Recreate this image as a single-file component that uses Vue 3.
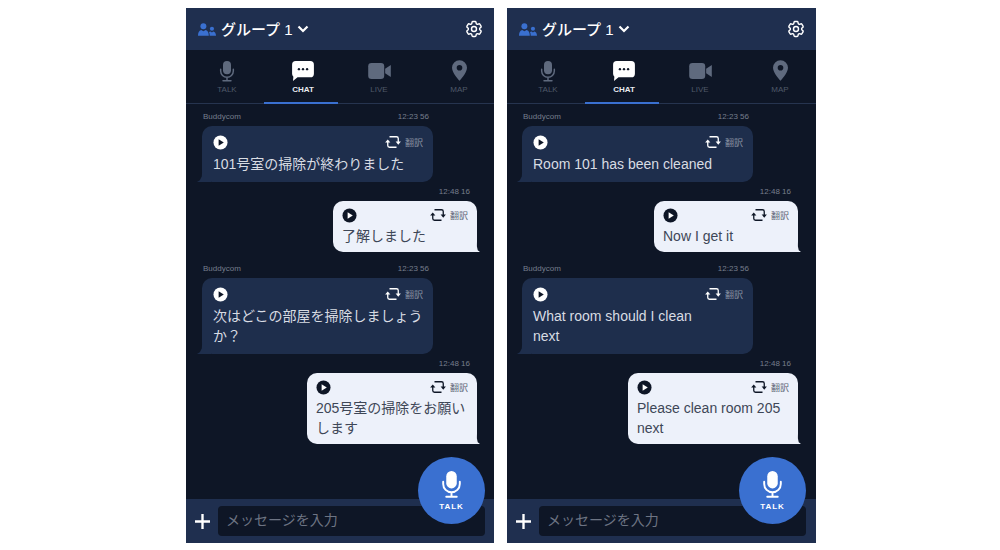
<template>
  <div class="page">
    <svg class="defs" width="0" height="0">
      <symbol id="mic" viewBox="0 0 24 32">
        <rect x="6" y="1" width="12" height="20" rx="6" fill="currentColor" />
        <path d="M2.500 13.500v2.500a9.500 9.500 0 0 0 19 0v-2.500M12 25.500V30M6 30.500h12" fill="none" stroke="currentColor" stroke-width="2.200" stroke-linecap="round" />
      </symbol>
      <symbol id="chat" viewBox="0 0 24 22">
        <path d="M4 0h16a4 4 0 0 1 4 4v10a4 4 0 0 1-4 4H6l-5 4 .4-4.800A4 4 0 0 1 0 14V4a4 4 0 0 1 4-4z" fill="currentColor" />
        <circle cx="7.500" cy="9" r="1.300" fill="#0e1626" />
        <circle cx="12" cy="9" r="1.300" fill="#0e1626" />
        <circle cx="16.500" cy="9" r="1.300" fill="#0e1626" />
      </symbol>
      <symbol id="video" viewBox="0 0 24 17">
        <rect x="0" y="0" width="17" height="17" rx="3.500" fill="currentColor" />
        <path d="M18 6l6-4v13l-6-4z" fill="currentColor" />
      </symbol>
      <symbol id="pin" viewBox="0 0 16 22">
        <path fill-rule="evenodd" d="M8 0a8 8 0 0 1 8 8c0 5.500-8 14-8 14S0 13.500 0 8a8 8 0 0 1 8-8zm0 5a3 3 0 1 0 0 6 3 3 0 0 0 0-6z" fill="currentColor" />
      </symbol>
      <symbol id="play" viewBox="0 0 16 16">
        <circle cx="8" cy="8" r="7.500" fill="var(--play-bg)" />
        <path d="M6 4.500l5.500 3.500L6 11.500z" fill="var(--play-fg)" />
      </symbol>
      <symbol id="repeat" viewBox="0 0 18 16">
        <path d="M5 2h8a2 2 0 0 1 2 2v4M13 14H5a2 2 0 0 1-2-2V8" fill="none" stroke="currentColor" stroke-width="1.500" />
        <path d="M12 7.500h6L15 11zM0 8.500h6L3 5z" fill="currentColor" />
      </symbol>
    </svg>

    <div v-for="(phone, p) in phones" :key="p" class="phone" :class="phone.cls">
      <header class="top">
        <svg class="group-icon" viewBox="0 0 20 14" width="18" height="13">
          <circle cx="6" cy="3.300" r="3.300" fill="#3a70d0" />
          <path d="M0 14c0-3.500 1-6 3.500-6.500L6 9l2.500-1.500C11 8 12 10.500 12 14z" fill="#3a70d0" />
          <circle cx="15.500" cy="6.200" r="2.300" fill="#3a70d0" />
          <path d="M13 14c0-2-.3-3.500-.8-4.300l1.800-.5 1.500 1 1.500-1c1.800.4 3 2 3 4.800z" fill="#3a70d0" />
        </svg>
        <span class="title">グループ 1</span>
        <svg class="chevron" viewBox="0 0 12 8" width="12" height="8">
          <path d="M1.500 1.500L6 6l4.500-4.500" fill="none" stroke="#fff" stroke-width="2.200" />
        </svg>
        <svg class="gear" viewBox="0 0 24 24" width="20" height="20" fill="none" stroke="#fff" stroke-width="1.700">
          <path d="M9.594 3.940c.09-.542.56-.94 1.110-.94h2.593c.55 0 1.020.398 1.110.94l.213 1.281c.063.374.313.686.645.870.074.040.147.083.22.127.324.196.72.257 1.075.124l1.217-.456a1.125 1.125 0 0 1 1.370.49l1.296 2.247a1.125 1.125 0 0 1-.26 1.431l-1.003.827c-.293.24-.438.613-.431.992a6.759 6.759 0 0 1 0 .255c-.007.378.138.75.43.99l1.005.828c.424.35.534.954.26 1.430l-1.298 2.247a1.125 1.125 0 0 1-1.369.491l-1.217-.456c-.355-.133-.75-.072-1.076.124a6.570 6.570 0 0 1-.22.128c-.331.183-.581.495-.644.869l-.213 1.280c-.09.543-.56.941-1.110.941h-2.594c-.55 0-1.020-.398-1.110-.94l-.213-1.281c-.062-.374-.312-.686-.644-.87a6.520 6.520 0 0 1-.22-.127c-.325-.196-.72-.257-1.076-.124l-1.217.456a1.125 1.125 0 0 1-1.369-.49l-1.297-2.247a1.125 1.125 0 0 1 .26-1.431l1.004-.827c.292-.24.437-.613.43-.992a6.932 6.932 0 0 1 0-.255c.007-.378-.138-.75-.43-.99l-1.004-.828a1.125 1.125 0 0 1-.26-1.430l1.297-2.247a1.125 1.125 0 0 1 1.370-.491l1.216.456c.356.133.751.072 1.076-.124.072-.044.146-.087.22-.128.332-.183.582-.495.644-.869l.214-1.281z" />
          <circle cx="12" cy="12" r="3" />
        </svg>
      </header>

      <nav class="tabs">
        <div v-for="tab in tabs" :key="tab.label" class="tab" :class="{ active: tab.active }">
          <div class="tab-icon">
            <svg :width="tab.w" :height="tab.h"><use :href="'#' + tab.icon" /></svg>
          </div>
          <span>{{ tab.label }}</span>
        </div>
      </nav>

      <main class="list">
        <div v-for="(m, i) in phone.messages" :key="i" class="msg" :class="m.mine ? 'mine' : 'other'">
          <div class="meta">
            <span v-if="!m.mine">Buddycom</span>
            <span>{{ m.time }}</span>
          </div>
          <div class="bubble" :style="{ width: m.width + 'px' }">
            <div class="bubble-head">
              <svg class="play" width="15" height="15"><use href="#play" /></svg>
              <span class="translate">
                <svg width="16" height="14"><use href="#repeat" /></svg>
                <span>翻訳</span>
              </span>
            </div>
            <p>{{ m.text }}</p>
          </div>
        </div>
      </main>

      <footer class="bottom">
        <svg viewBox="0 0 14 14" width="15" height="15">
          <path d="M7 0v14M0 7h14" stroke="#fff" stroke-width="2.200" />
        </svg>
        <input class="field" type="text" placeholder="メッセージを入力" />
      </footer>

      <button class="fab">
        <svg width="21" height="28"><use href="#mic" /></svg>
        <span>TALK</span>
      </button>
    </div>
  </div>
</template>

<script setup>
const tabs = [
  { label: 'TALK', icon: 'mic', w: 16, h: 22 },
  { label: 'CHAT', icon: 'chat', w: 22, h: 20, active: true },
  { label: 'LIVE', icon: 'video', w: 23, h: 16 },
  { label: 'MAP', icon: 'pin', w: 15, h: 21 }
]

const phones = [
  {
    cls: 'first',
    messages: [
      { time: '12:23 56', width: 231, text: '101号室の掃除が終わりました' },
      { time: '12:48 16', width: 144, mine: true, text: '了解しました' },
      { time: '12:23 56', width: 231, text: '次はどこの部屋を掃除しましょうか？' },
      { time: '12:48 16', width: 170, mine: true, text: '205号室の掃除をお願いします' }
    ]
  },
  {
    cls: 'second',
    messages: [
      { time: '12:23 56', width: 231, text: 'Room 101 has been cleaned' },
      { time: '12:48 16', width: 144, mine: true, text: 'Now I get it' },
      { time: '12:23 56', width: 231, text: 'What room should I clean\nnext' },
      { time: '12:48 16', width: 170, mine: true, text: 'Please clean room 205\nnext' }
    ]
  }
]
</script>

<style>
html,
body {
  margin: 0;
  background: #fff;
}
</style>

<style scoped>
.page {
  display: flex;
  gap: 13px;
  width: 1000px;
  height: 550px;
  box-sizing: border-box;
  padding: 8px 0 0 186px;
  font-family: "Liberation Sans", "Noto Sans CJK JP", sans-serif;
  overflow: hidden;
}

.defs {
  position: absolute;
}

.phone {
  position: relative;
  display: flex;
  flex-direction: column;
  width: 308px;
  height: 535px;
  background: #0e1626;
}

.phone.second {
  width: 309px;
}

.top {
  display: flex;
  align-items: center;
  height: 42px;
  flex-shrink: 0;
  box-sizing: border-box;
  padding: 0 10px 0 12px;
  background: #1f2f4f;
  color: #fff;
}

.title {
  margin: 0 0 2px 5px;
  font-size: 15px;
  font-weight: 500;
}

.chevron {
  margin-left: 4px;
}

.gear {
  margin-left: auto;
}

.tabs {
  display: grid;
  grid-template-columns: 76px 76px 76px 77px;
  height: 54px;
  flex-shrink: 0;
  box-sizing: border-box;
  padding-left: 3px;
  border-bottom: 1px solid #26344f;
}

.tab {
  position: relative;
  display: flex;
  flex-direction: column;
  align-items: center;
  gap: 3px;
  padding-top: 9px;
  color: #5f6a7e;
}

.tab:last-child {
  padding-left: 7px;
}

.tab-icon {
  display: flex;
  align-items: center;
  justify-content: center;
  height: 23px;
}

.tab span {
  font-size: 8px;
  line-height: 10px;
  color: #4f5969;
}

.tab.active {
  color: #fff;
}

.tab.active span {
  color: #e8ebf0;
  font-weight: 700;
}

.tab.active::after {
  content: "";
  position: absolute;
  left: -1px;
  right: 3px;
  bottom: -1px;
  height: 2px;
  background: #3a70d0;
}

.list {
  flex: 1;
  padding: 8px 17px 0 16px;
}

.second .list {
  padding: 8px 18px 0 15px;
}

.msg {
  display: flex;
  flex-direction: column;
}

.msg.other {
  margin-top: 12px;
  align-items: flex-start;
}

.msg.mine {
  margin-top: 5px;
  align-items: flex-end;
}

.msg:first-child {
  margin-top: 0;
}

.meta {
  display: flex;
  justify-content: space-between;
  height: 10px;
  margin-bottom: 4px;
  font-size: 8px;
  line-height: 10px;
  color: #767e8d;
}

.other .meta {
  width: 226px;
  margin-left: 1px;
}

.mine .meta {
  margin-right: 7px;
}

.bubble {
  position: relative;
  box-sizing: border-box;
  border-radius: 10px;
}

.other .bubble {
  padding: 7px 10px 8px 11px;
  background: #1e2e4c;
  color: #d8dce3;
  --play-bg: #fff;
  --play-fg: #0e1626;
}

.mine .bubble {
  padding: 5px 9px 6px;
  background: #edf1fa;
  color: #3e4757;
  --play-bg: #0e1626;
  --play-fg: #fff;
}

.bubble::after {
  content: "";
  position: absolute;
  bottom: 0;
  width: 14px;
  height: 12px;
}

.other .bubble::after {
  left: -5px;
  background: #1e2e4c;
  clip-path: polygon(100% 0, 100% 100%, 0 100%, 20% 85%, 34% 55%, 38% 0);
}

.mine .bubble::after {
  right: -3px;
  background: #edf1fa;
  clip-path: polygon(0 0, 0 100%, 100% 100%, 84% 85%, 78% 55%, 76% 0);
}

.bubble-head {
  display: flex;
  align-items: center;
  justify-content: space-between;
  height: 18px;
}

.translate {
  display: flex;
  align-items: center;
  gap: 4px;
  font-size: 9px;
  color: #8b93a3;
}

.other .translate svg {
  color: #fff;
}

.mine .translate svg {
  color: #0e1626;
}

.mine .translate {
  color: #5a6373;
}

.bubble p {
  margin: 3px 0 0;
  font-size: 14px;
  line-height: 20px;
  white-space: pre-line;
}

.mine .bubble p {
  margin-top: 2px;
}

.bottom {
  display: flex;
  align-items: center;
  gap: 8px;
  height: 44px;
  flex-shrink: 0;
  box-sizing: border-box;
  padding: 0 9px;
  background: #1f2f4f;
}

.second .bottom {
  padding-right: 10px;
}

.field {
  flex: 1;
  min-width: 0;
  height: 30px;
  box-sizing: border-box;
  padding: 0 8px 2px;
  border: 0;
  border-radius: 4px;
  background: #0e1626;
  font: inherit;
  font-size: 14px;
  color: #fff;
}

.field::placeholder {
  color: #6d7483;
  opacity: 1;
}

.fab {
  position: absolute;
  right: 9px;
  bottom: 19px;
  display: flex;
  flex-direction: column;
  align-items: center;
  justify-content: center;
  gap: 4px;
  width: 67px;
  height: 67px;
  padding: 0;
  border: 0;
  border-radius: 50%;
  background: #3a70d0;
  color: #fff;
  font: inherit;
}

.second .fab {
  right: 10px;
}

.fab span {
  font-size: 8px;
  line-height: 10px;
  font-weight: 700;
  letter-spacing: 1px;
}
</style>
